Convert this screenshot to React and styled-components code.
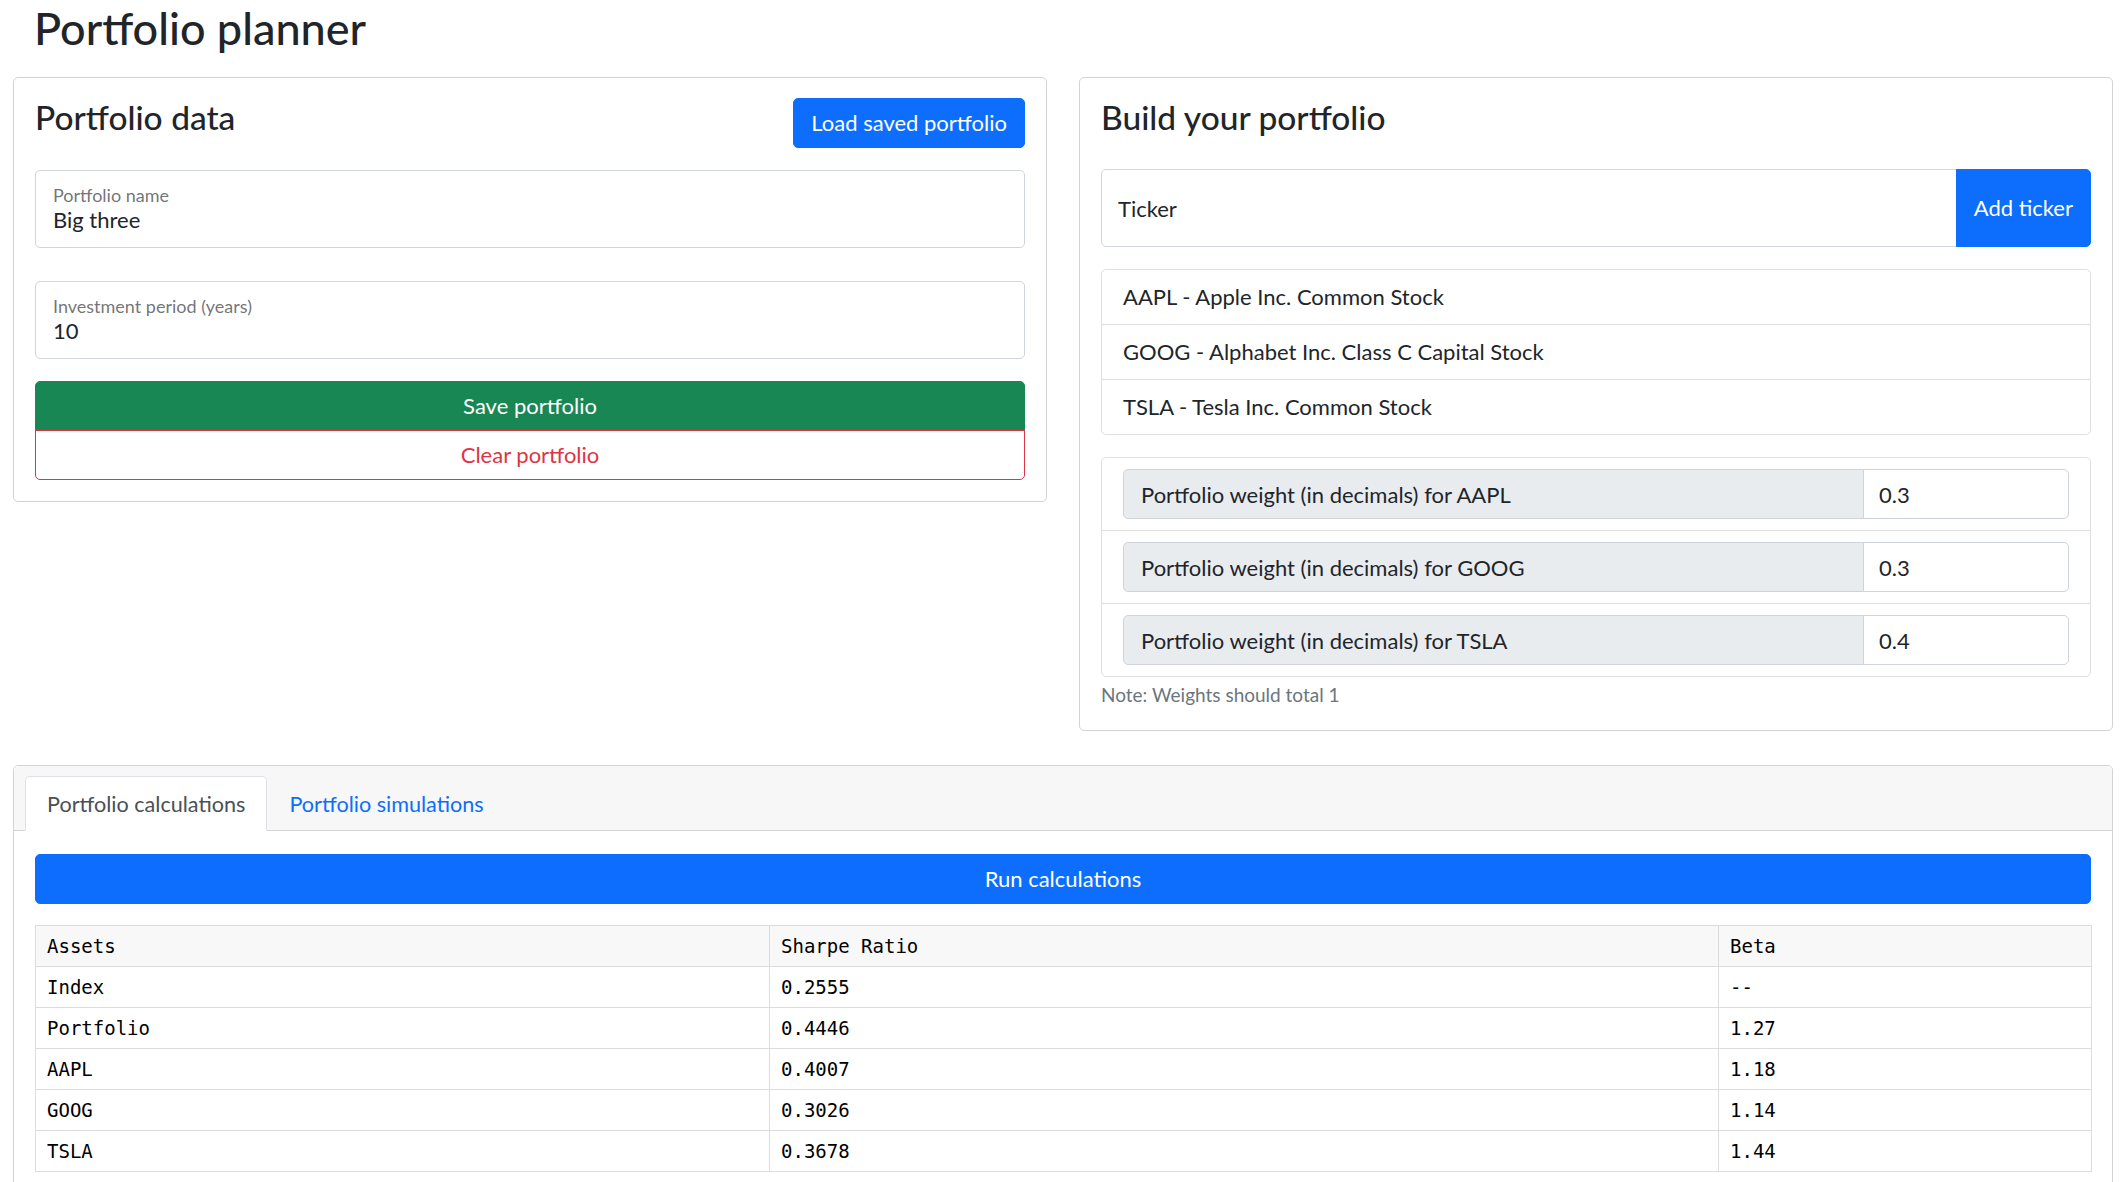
import React from 'react';
import styled, { createGlobalStyle, css } from 'styled-components';

const GlobalStyle = createGlobalStyle`
    html, body {
        margin: 0;
        padding: 0;
        background: #fff;
        overflow: hidden;
    }

    body {
        font-family: Lato, "Noto Sans", sans-serif;
        color: #212529;
    }

    *, *::before, *::after {
        box-sizing: border-box;
    }
`;

const VARIANTS = {
    primary: css`
        background: #0d6efd;
        border-color: #0d6efd;
        color: #fff;
    `,
    success: css`
        background: #198754;
        border-color: #198754;
        color: #fff;
    `,
    outlineDanger: css`
        background: #fff;
        border-color: #dc3545;
        color: #dc3545;
    `,
};

const Page = styled.div`
    padding: 0 15px 0 13px;
`;

const Title = styled.h2`
    margin: 1px 0 22px 21px;
    font-size: 45px;
    font-weight: 500;
    line-height: 1.2;
`;

const TopGrid = styled.div`
    display: grid;
    grid-template-columns: 1fr 1fr;
    gap: 32px;
    align-items: start;
`;

const Card = styled.section`
    border: 1px solid #d3d3d3;
    border-radius: 5px;
    padding: 20px 21px 21px;
    background: #fff;
`;

const CardHeader = styled.div`
    display: flex;
    justify-content: space-between;
    align-items: flex-start;
    min-height: 51px;
    margin-bottom: 21px;
`;

const CardTitle = styled.h4`
    margin: -1px 0 0;
    font-size: 33.5px;
    font-weight: 500;
    line-height: 1.2;
`;

const Button = styled.button`
    font-family: inherit;
    font-size: 22px;
    line-height: 32px;
    padding: 8px 17px;
    border: 1px solid transparent;
    border-radius: 5px;
    cursor: pointer;
    white-space: nowrap;
    ${(p) => VARIANTS[p.$variant || 'primary']}
    ${(p) => p.$block && css`
        width: 100%;
    `}
`;

const FieldStack = styled.div`
    display: flex;
    flex-direction: column;
    gap: 33px;
`;

const Field = styled.div`
    display: flex;
    flex-direction: column;
    height: 78px;
    padding: 13px 17px 0;
    border: 1px solid #d0d5db;
    border-radius: 5px;
`;

const FieldLabel = styled.label`
    font-size: 18px;
    line-height: 22px;
    color: rgba(33, 37, 41, 0.65);
`;

const FieldInput = styled.input`
    border: 0;
    outline: 0;
    padding: 0;
    margin: 0;
    height: 28px;
    font-family: inherit;
    font-size: 22px;
    line-height: 28px;
    color: #212529;
    background: transparent;
`;

const ButtonStack = styled.div`
    display: flex;
    flex-direction: column;
    margin-top: 22px;

    ${Button} {
        height: 50px;
        padding: 0 17px;
    }

    ${Button}:first-child {
        border-radius: 5px 5px 0 0;
    }

    ${Button} + ${Button} {
        margin-top: -1px;
        border-radius: 0 0 5px 5px;
    }
`;

const TickerGroup = styled.div`
    display: flex;
    height: 78px;
    margin-top: -1px;
`;

const TickerInput = styled.input`
    flex: 1;
    min-width: 0;
    padding: 0 16px;
    border: 1px solid #d0d5db;
    border-radius: 5px 0 0 5px;
    outline: 0;
    font-family: inherit;
    font-size: 22px;
    color: #212529;

    &::placeholder {
        color: #212529;
    }
`;

const AddButton = styled(Button)`
    margin-left: -1px;
    padding: 0 17px;
    border-radius: 0 5px 5px 0;
`;

const ListGroup = styled.ul`
    list-style: none;
    margin: 22px 0 0;
    padding: 0;
    border: 1px solid #dfdfdf;
    border-radius: 5px;
`;

const ListItem = styled.li`
    padding: 11px 21px;
    font-size: 22px;
    line-height: 32px;

    & + & {
        border-top: 1px solid #dfdfdf;
    }
`;

const WeightGroup = styled(ListGroup)`
    margin-top: 22px;
`;

const WeightItem = styled.li`
    padding: 11px 21px;

    & + & {
        border-top: 1px solid #dfdfdf;
    }
`;

const WeightRow = styled.div`
    display: flex;
    height: 50px;
    font-size: 22px;
`;

const WeightLabel = styled.label`
    flex: 1;
    display: flex;
    align-items: center;
    padding: 0 17px;
    background: #e9ecef;
    border: 1px solid #ced4da;
    border-radius: 5px 0 0 5px;
    color: #212529;
`;

const WeightInput = styled.input`
    width: 206px;
    margin-left: -1px;
    padding: 0 15px;
    border: 1px solid #ced4da;
    border-radius: 0 5px 5px 0;
    outline: 0;
    font-family: inherit;
    font-size: 22px;
    color: #212529;
`;

const Note = styled.div`
    margin-top: 4px;
    font-size: 19px;
    line-height: 28px;
    color: #6c757d;
`;

const ResultsCard = styled.section`
    margin-top: 34px;
    border: 1px solid #d3d3d3;
    border-radius: 5px;
    overflow: hidden;
`;

const TabsHeader = styled.div`
    padding: 10px 21px 0 11px;
    background: #f7f7f7;
    border-bottom: 1px solid #d5d5d5;
`;

const TabList = styled.div`
    display: flex;
    margin-bottom: -1px;
`;

const Tab = styled.button`
    display: flex;
    align-items: center;
    height: 55px;
    padding: 0 21px;
    font-family: inherit;
    font-size: 21.6px;
    background: transparent;
    border: 1px solid transparent;
    border-radius: 5px 5px 0 0;
    color: #0d6efd;
    cursor: pointer;

    ${(p) => p.$active && css`
        background: #fff;
        border-color: #dee2e6 #dee2e6 #fff;
        color: #495057;
    `}
`;

const CardBody = styled.div`
    padding: 23px 21px 22px;
`;

const RunButton = styled(Button)`
    height: 50px;
    padding: 0 17px;
`;

const Table = styled.table`
    width: 100%;
    margin-top: 21px;
    border-collapse: collapse;
    table-layout: fixed;
    font-family: "DejaVu Sans Mono", "Liberation Mono", monospace;
    font-size: 19px;
    line-height: 24px;
    color: #000;
`;

const Th = styled.th`
    width: ${(p) => p.$w}px;
    padding: 8px 11px;
    text-align: left;
    font-weight: 400;
    background: #f8f8f8;
    border: 1px solid #dcdcdc;
`;

const Td = styled.td`
    padding: 8px 11px;
    border: 1px solid #dcdcdc;
`;

const tickers = [
    { symbol: 'AAPL', name: 'Apple Inc. Common Stock', weight: '0.3' },
    { symbol: 'GOOG', name: 'Alphabet Inc. Class C Capital Stock', weight: '0.3' },
    { symbol: 'TSLA', name: 'Tesla Inc. Common Stock', weight: '0.4' },
];

const results = [
    ['Index', '0.2555', '--'],
    ['Portfolio', '0.4446', '1.27'],
    ['AAPL', '0.4007', '1.18'],
    ['GOOG', '0.3026', '1.14'],
    ['TSLA', '0.3678', '1.44'],
];

const App = () => (
    <>
        <GlobalStyle />
        <Page>
            <Title>Portfolio planner</Title>
            <TopGrid>
                <Card>
                    <CardHeader>
                        <CardTitle>Portfolio data</CardTitle>
                        <Button $variant="primary">Load saved portfolio</Button>
                    </CardHeader>
                    <FieldStack>
                        <Field>
                            <FieldLabel>Portfolio name</FieldLabel>
                            <FieldInput defaultValue="Big three" />
                        </Field>
                        <Field>
                            <FieldLabel>Investment period (years)</FieldLabel>
                            <FieldInput defaultValue="10" />
                        </Field>
                    </FieldStack>
                    <ButtonStack>
                        <Button $variant="success">Save portfolio</Button>
                        <Button $variant="outlineDanger">Clear portfolio</Button>
                    </ButtonStack>
                </Card>

                <Card>
                    <CardHeader>
                        <CardTitle>Build your portfolio</CardTitle>
                    </CardHeader>
                    <TickerGroup>
                        <TickerInput placeholder="Ticker" />
                        <AddButton $variant="primary">Add ticker</AddButton>
                    </TickerGroup>
                    <ListGroup>
                        {tickers.map((t) => (
                            <ListItem key={t.symbol}>{`${t.symbol} - ${t.name}`}</ListItem>
                        ))}
                    </ListGroup>
                    <WeightGroup>
                        {tickers.map((t) => (
                            <WeightItem key={t.symbol}>
                                <WeightRow>
                                    <WeightLabel>{`Portfolio weight (in decimals) for ${t.symbol}`}</WeightLabel>
                                    <WeightInput defaultValue={t.weight} />
                                </WeightRow>
                            </WeightItem>
                        ))}
                    </WeightGroup>
                    <Note>Note: Weights should total 1</Note>
                </Card>
            </TopGrid>

            <ResultsCard>
                <TabsHeader>
                    <TabList>
                        <Tab $active>Portfolio calculations</Tab>
                        <Tab>Portfolio simulations</Tab>
                    </TabList>
                </TabsHeader>
                <CardBody>
                    <RunButton $variant="primary" $block>Run calculations</RunButton>
                    <Table>
                        <thead>
                            <tr>
                                <Th $w={734}>Assets</Th>
                                <Th $w={949}>Sharpe Ratio</Th>
                                <Th $w={373}>Beta</Th>
                            </tr>
                        </thead>
                        <tbody>
                            {results.map((row) => (
                                <tr key={row[0]}>
                                    {row.map((cell, i) => <Td key={i}>{cell}</Td>)}
                                </tr>
                            ))}
                        </tbody>
                    </Table>
                </CardBody>
            </ResultsCard>
        </Page>
    </>
);

export default App;
